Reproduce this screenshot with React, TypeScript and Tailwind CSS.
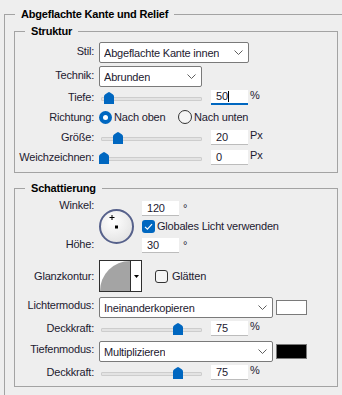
import type { ReactNode } from "react";

/*
  Ebenenstil-Dialog: Abgeflachte Kante und Relief.
  Zwei Gruppenrahmen (Struktur / Schattierung) als fieldset + legend,
  Beschriftungen rechtsbündig in einer festen Spalte.
*/

function Label({ children, className = "" }: { children: ReactNode; className?: string }) {
  return <div className={`w-[79px] shrink-0 text-right ${className}`}>{children}</div>;
}

function Chevron() {
  return (
    <svg width="9" height="5" viewBox="0 0 9 5" className="shrink-0">
      <path d="M0.5 0.5 L4.5 4.5 L8.5 0.5" fill="none" stroke="#5f5f5f" strokeWidth="1" />
    </svg>
  );
}

function Dropdown({ value, className = "" }: { value: string; className?: string }) {
  return (
    <div
      className={`ml-[5px] flex h-[21px] shrink-0 items-center justify-between rounded-[2px] border border-[#7a7a7a] bg-white pl-[4px] pr-[5px] ${className}`}
    >
      <span className="truncate">{value}</span>
      <Chevron />
    </div>
  );
}

function Thumb() {
  return (
    <svg width="10" height="12" viewBox="0 0 10 12">
      <path
        d="M0 12 V4.5 Q0 3.2 1.3 2.3 L4 0.4 Q5 -0.2 6 0.4 L8.7 2.3 Q10 3.2 10 4.5 V12 Z"
        fill="#0067c0"
      />
    </svg>
  );
}

function Slider({ pos }: { pos: number }) {
  return (
    <div className="relative ml-[5px] h-[20px] w-[106px] shrink-0">
      <div className="absolute left-[2px] right-[3px] top-[10px] h-[4px] rounded-[1px] border border-[#cdcdcd] bg-[#e3e3e3]" />
      <div className="absolute top-[5px] flex" style={{ left: pos }}>
        <Thumb />
      </div>
    </div>
  );
}

function NumInput({ value, focused = false, className = "" }: { value: string; focused?: boolean; className?: string }) {
  return (
    <div
      className={`flex h-[15px] w-[37px] shrink-0 items-center bg-white pl-[5px] ${
        focused ? "border-b-2 border-[#0067c0]" : "border-b border-[#bcbcbc]"
      } ${className}`}
    >
      <span>{value}</span>
      {focused && <span className="h-[11px] w-px bg-black" />}
    </div>
  );
}

function SliderRow({ label, pos, value, unit, focused }: { label: string; pos: number; value: string; unit: string; focused?: boolean }) {
  return (
    <div className="flex h-[20px] items-center">
      <Label>{label}</Label>
      <Slider pos={pos} />
      <NumInput value={value} focused={focused} className="ml-[6px]" />
      <span className="mb-[4px] ml-[2px]">{unit}</span>
    </div>
  );
}

function RadioOn() {
  return (
    <div className="flex h-[13px] w-[13px] shrink-0 items-center justify-center rounded-full bg-[#0067c0]">
      <div className="h-[5px] w-[5px] rounded-full bg-white" />
    </div>
  );
}

function RadioOff() {
  return <div className="h-[14px] w-[14px] shrink-0 rounded-full border border-[#333333] bg-[#f5f5f5]" />;
}

function CheckOn() {
  return (
    <div className="flex h-[13px] w-[13px] shrink-0 items-center justify-center rounded-[3px] bg-[#0067c0]">
      <svg width="13" height="13" viewBox="0 0 13 13">
        <path d="M3 6.8 L5.4 9.2 L10 4.2" fill="none" stroke="white" strokeWidth="1.2" />
      </svg>
    </div>
  );
}

function CheckOff() {
  return <div className="h-[13px] w-[13px] shrink-0 rounded-[3px] border border-[#333333] bg-[#f5f5f5]" />;
}

function AngleDial() {
  return (
    <svg width="35" height="35" viewBox="0 0 35 35" className="shrink-0">
      <defs>
        <radialGradient id="dial" cx="40%" cy="35%" r="70%">
          <stop offset="0" stopColor="#ffffff" />
          <stop offset="1" stopColor="#e2e2e2" />
        </radialGradient>
      </defs>
      <circle cx="17.5" cy="17.5" r="16.5" fill="url(#dial)" stroke="#56618b" strokeWidth="2" />
      <path d="M10.5 8.5 H15.5 M13 6 V11" stroke="#000" strokeWidth="1" />
      <rect x="16" y="16.5" width="3" height="3" fill="#000" />
    </svg>
  );
}

function ContourPicker() {
  return (
    <div className="ml-[5px] flex h-[32px] w-[43px] shrink-0 border border-[#2f2f2f] bg-white">
      <svg width="30" height="30" viewBox="0 0 30 30">
        <path d="M0 30 A30 30 0 0 1 30 0 V30 Z" fill="#a4a4a4" />
      </svg>
      <div className="w-px bg-[#2f2f2f]" />
      <div className="flex flex-1 items-center justify-center">
        <svg width="5" height="3" viewBox="0 0 5 3">
          <path d="M0 0 H5 L2.5 3 Z" fill="#000" />
        </svg>
      </div>
    </div>
  );
}

function Swatch({ className }: { className: string }) {
  return <div className={`ml-[3px] h-[15px] w-[31px] shrink-0 border border-[#7a7a7a] ${className}`} />;
}

export default function App() {
  return (
    <div className="h-[395px] w-[342px] overflow-hidden bg-[#eeeeee] pl-[4px] pt-[6px] font-['Liberation_Sans',Arial,sans-serif] text-[11px] leading-[14px] tracking-[-0.2px] text-[#1d2030]">
      <fieldset className="w-[360px] border border-[#a3a3a3] pb-[40px]">
        <legend className="ml-[10px] px-[6px] font-bold leading-[16px] text-black">Abgeflachte Kante und Relief</legend>

        <fieldset className="ml-[9px] mt-[1px] w-[324px] border border-[#a3a3a3]">
          <legend className="ml-[10px] px-[6px] font-bold leading-[16px] text-black">Struktur</legend>
          <div className="flex flex-col pb-[5px] pt-[3px]">
            <div className="flex items-center">
              <Label className="mb-[4px]">Stil:</Label>
              <Dropdown value="Abgeflachte Kante innen" className="w-[150px]" />
            </div>
            <div className="mt-[3px] flex items-center">
              <Label className="mb-[4px]">Technik:</Label>
              <Dropdown value="Abrunden" className="w-[103px]" />
            </div>
            <SliderRow label="Tiefe:" pos={5} value="50" unit="%" focused />
            <div className="flex h-[20px] items-center">
              <Label>Richtung:</Label>
              <div className="ml-[5px] flex w-[79px] items-center gap-[2px]">
                <RadioOn />
                <span>Nach oben</span>
              </div>
              <div className="flex items-center gap-[2px]">
                <RadioOff />
                <span>Nach unten</span>
              </div>
            </div>
            <SliderRow label="Größe:" pos={14} value="20" unit="Px" />
            <SliderRow label="Weichzeichnen:" pos={0} value="0" unit="Px" />
          </div>
        </fieldset>

        <fieldset className="ml-[9px] mt-[7px] w-[324px] border border-[#a3a3a3]">
          <legend className="ml-[10px] px-[6px] font-bold leading-[16px] text-black">Schattierung</legend>
          <div className="flex flex-col pb-[4px] pt-[2px]">
            <div className="flex items-start">
              <div className="flex h-[53px] w-[79px] shrink-0 flex-col justify-between text-right">
                <span>Winkel:</span>
                <span>Höhe:</span>
              </div>
              <div className="ml-[5px] mt-[11px] flex">
                <AngleDial />
              </div>
              <div className="ml-[8px] mt-[3px] flex flex-col">
                <div className="flex items-start">
                  <NumInput value="120" />
                  <span className="ml-[4px]">°</span>
                </div>
                <div className="mt-[3px] flex items-center">
                  <CheckOn />
                  <span className="ml-[2px]">Globales Licht verwenden</span>
                </div>
                <div className="mt-[5px] flex items-start">
                  <NumInput value="30" />
                  <span className="ml-[4px]">°</span>
                </div>
              </div>
            </div>

            <div className="mt-[7px] flex items-center">
              <Label>Glanzkontur:</Label>
              <ContourPicker />
              <div className="ml-[13px] flex items-center">
                <CheckOff />
                <span className="ml-[4px]">Glätten</span>
              </div>
            </div>

            <div className="mt-[5px] flex items-center">
              <Label className="mb-[5px]">Lichtermodus:</Label>
              <Dropdown value="Ineinanderkopieren" className="w-[174px]" />
              <Swatch className="bg-white" />
            </div>
            <SliderRow label="Deckkraft:" pos={74} value="75" unit="%" />
            <div className="mt-[3px] flex items-center">
              <Label className="mb-[5px]">Tiefenmodus:</Label>
              <Dropdown value="Multiplizieren" className="w-[174px]" />
              <Swatch className="bg-black" />
            </div>
            <SliderRow label="Deckkraft:" pos={74} value="75" unit="%" />
          </div>
        </fieldset>
      </fieldset>
    </div>
  );
}
